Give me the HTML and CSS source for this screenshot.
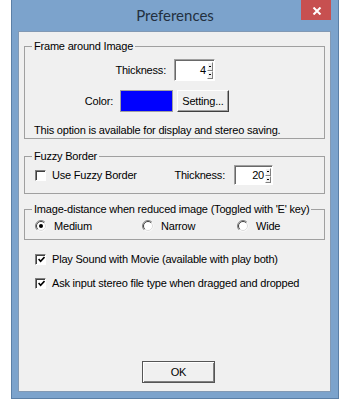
FILE: index.html
```html
<!DOCTYPE html>
<html>
<head>
<meta charset="utf-8">
<title>Preferences</title>
<link rel="stylesheet" href="styles.css">
</head>
<body>
<div class="window">
  <div class="titlebar">
    <span></span>
    <div class="title">Preferences</div>
    <div class="close"><svg width="10" height="8" viewBox="0 0 10 8"><path d="M1.5 0.5 L8.5 7.5 M8.5 0.5 L1.5 7.5" stroke="#fff" stroke-width="2"/></svg></div>
  </div>
  <div class="client">
    <fieldset class="group g1">
      <legend>Frame around Image</legend>
      <div class="row r-thick">
        <span class="lbl w132">Thickness:</span>
        <div class="spin s41"><span class="val">4</span><div class="spinbtns"><i></i><i></i></div></div>
      </div>
      <div class="row r-color">
        <span class="lbl w79">Color:</span>
        <div class="swatch"></div>
        <button class="btn setting">Setting...</button>
      </div>
      <div class="note">This option is available for display and stereo saving.</div>
    </fieldset>

    <fieldset class="group g2">
      <legend>Fuzzy Border</legend>
      <div class="row r-fuzzy">
        <div class="fz-left"><span class="cb"></span><span class="cb-lbl">Use Fuzzy Border</span></div>
        <span class="lbl w51">Thickness:</span>
        <div class="spin s39"><span class="val">20</span><div class="spinbtns"><i></i><i></i></div></div>
      </div>
    </fieldset>

    <fieldset class="group g3">
      <legend>Image-distance when reduced image (Toggled with 'E' key)</legend>
      <div class="row r-radio">
        <div class="opt o1"><svg class="rd" width="12" height="12" viewBox="0 0 12 12"><circle cx="6" cy="6" r="5.5" fill="#fff"/><path d="M2.1 9.9 A5.5 5.5 0 0 1 9.9 2.1" fill="none" stroke="#808080"/><path d="M2.8 9.2 A4.5 4.5 0 0 1 9.2 2.8" fill="none" stroke="#404040"/><path d="M9.2 2.8 A4.5 4.5 0 0 1 2.8 9.2" fill="none" stroke="#dcdcdc"/><circle cx="6" cy="6" r="2" fill="#000"/></svg><span class="opt-lbl">Medium</span></div>
        <div class="opt o2"><svg class="rd" width="12" height="12" viewBox="0 0 12 12"><circle cx="6" cy="6" r="5.5" fill="#fff"/><path d="M2.1 9.9 A5.5 5.5 0 0 1 9.9 2.1" fill="none" stroke="#808080"/><path d="M2.8 9.2 A4.5 4.5 0 0 1 9.2 2.8" fill="none" stroke="#404040"/><path d="M9.2 2.8 A4.5 4.5 0 0 1 2.8 9.2" fill="none" stroke="#dcdcdc"/></svg><span class="opt-lbl">Narrow</span></div>
        <div class="opt o3"><svg class="rd" width="12" height="12" viewBox="0 0 12 12"><circle cx="6" cy="6" r="5.5" fill="#fff"/><path d="M2.1 9.9 A5.5 5.5 0 0 1 9.9 2.1" fill="none" stroke="#808080"/><path d="M2.8 9.2 A4.5 4.5 0 0 1 9.2 2.8" fill="none" stroke="#404040"/><path d="M9.2 2.8 A4.5 4.5 0 0 1 2.8 9.2" fill="none" stroke="#dcdcdc"/></svg><span class="opt-lbl">Wide</span></div>
      </div>
    </fieldset>

    <div class="chk-row c1"><span class="cb"><svg width="7" height="7" viewBox="0 0 7 7"><path d="M0.6 3 L2.6 5.2 L6.5 1" fill="none" stroke="#000" stroke-width="1.6"/></svg></span><span class="cb-lbl">Play Sound with Movie (available with play both)</span></div>
    <div class="chk-row c2"><span class="cb"><svg width="7" height="7" viewBox="0 0 7 7"><path d="M0.6 3 L2.6 5.2 L6.5 1" fill="none" stroke="#000" stroke-width="1.6"/></svg></span><span class="cb-lbl">Ask input stereo file type when dragged and dropped</span></div>

    <button class="btn ok">OK</button>
  </div>
</div>
</body>
</html>
```

FILE: styles.css
```css
* { box-sizing: border-box; }
html, body { margin: 0; padding: 0; background: #fff; }
body {
  font-family: "Liberation Sans", Arial, sans-serif;
  font-size: 11px;
  letter-spacing: -0.2px;
  color: #000;
}
.window {
  margin-left: 11px;
  width: 328px;
  height: 399px;
  background: #7ca3cc;
  border: 1px solid #5b7fa6;
  border-top: 0;
  display: flex;
  flex-direction: column;
}
.titlebar {
  height: 31px;
  flex: none;
  display: grid;
  grid-template-columns: 1fr auto 1fr;
}
.title {
  font-family: Lato, "Noto Sans", sans-serif;
  font-size: 15px;
  letter-spacing: 0;
  line-height: 30px;
  color: #23303f;
}
.close {
  justify-self: end;
  align-self: start;
  width: 30px;
  height: 20px;
  margin-right: 7px;
  background: #c75050;
  display: flex;
  align-items: center;
  justify-content: center;
  padding-top: 2px;
  padding-left: 1px;
}
.client {
  height: 361px;
  flex: none;
  margin: 0 7px 0 6px;
  background: #f0f0f0;
  border: 1px solid #8299b4;
  padding: 8px 5px 8px 5px;
  display: flex;
  flex-direction: column;
}
.group {
  margin: 0;
  min-width: 0;
  border: 1px solid #a0a0a0;
}
.group legend {
  padding: 0 2px;
  margin-left: -2px;
  line-height: 13px;
  font-size: 11px;
  white-space: nowrap;
}
.g1 { padding: 6px 8px 1px 9px; }
.g2 { margin-top: 11px; padding: 2px 8px 8px 9px; }
.g3 { margin-top: 9px; padding: 3px 8px 6px 9px; }

.row { display: flex; align-items: center; }
.r-thick, .r-color { height: 22px; }
.r-color { margin-top: 9px; }
.r-fuzzy { height: 20px; }
.r-radio { height: 14px; }
.lbl { text-align: right; white-space: nowrap; }
.w132 { width: 132px; margin-right: 8px; }
.w79 { width: 79px; margin-right: 7px; }
.w51 { width: 51px; margin-right: 9px; }
.note { margin-top: 12px; line-height: 13px; white-space: nowrap; }

.spin {
  display: flex;
  background: #fff;
  border: 1px solid;
  border-color: #a0a0a0 #fff #fff #a0a0a0;
  box-shadow: inset 1px 1px 0 #696969;
  padding: 2px 1px 1px 2px;
}
.s41 { width: 41px; height: 22px; }
.s39 { width: 39px; height: 20px; }
.val { flex: 1; text-align: right; align-self: center; padding-right: 1px; line-height: 13px; }
.spinbtns { width: 6px; display: flex; flex-direction: column; }
.spinbtns i {
  flex: 1;
  background: #f0f0f0;
  border: 1px solid;
  border-color: #fff #808080 #808080 #fff;
  display: flex;
  align-items: center;
  justify-content: center;
}
.spinbtns i::after { content: ""; width: 2px; height: 1px; background: #000; }

.swatch {
  width: 53px;
  height: 22px;
  background: #0000ff;
  border: 1px solid #a0a0a0;
  margin-right: 4px;
}
.btn {
  font: inherit;
  letter-spacing: inherit;
  color: #000;
  background: #f0f0f0;
  padding: 0;
  border: 1px solid;
  border-color: #fff #404040 #404040 #fff;
  box-shadow: inset -1px -1px 0 #a0a0a0;
}
.setting { width: 52px; height: 22px; }
.ok {
  margin-top: auto;
  align-self: center;
  margin-left: 8px;
  width: 73px;
  height: 22px;
  border: 1px solid #555;
  box-shadow: inset 1px 1px 0 #fff, inset -1px -1px 0 #808080;
}

.fz-left { width: 140px; display: flex; align-items: center; }
.cb {
  flex: none;
  width: 11px;
  height: 11px;
  margin-left: 1px;
  background: #fff;
  border: 1px solid;
  border-color: #808080 #fff #fff #808080;
  box-shadow: inset 1px 1px 0 #404040;
  display: flex;
  align-items: center;
  justify-content: center;
  padding: 1px 0 0 1px;
}
.cb-lbl { margin-left: 6px; white-space: nowrap; line-height: 13px; }

.opt { display: flex; align-items: center; }
.o1 { width: 107px; margin-left: 1px; }
.o2 { width: 95px; }
.rd { flex: none; }
.opt-lbl { margin-left: 7px; line-height: 13px; }

.chk-row { display: flex; align-items: center; height: 14px; padding-left: 10px; }
.c1 { margin-top: 12px; }
.c2 { margin-top: 10px; }
```
